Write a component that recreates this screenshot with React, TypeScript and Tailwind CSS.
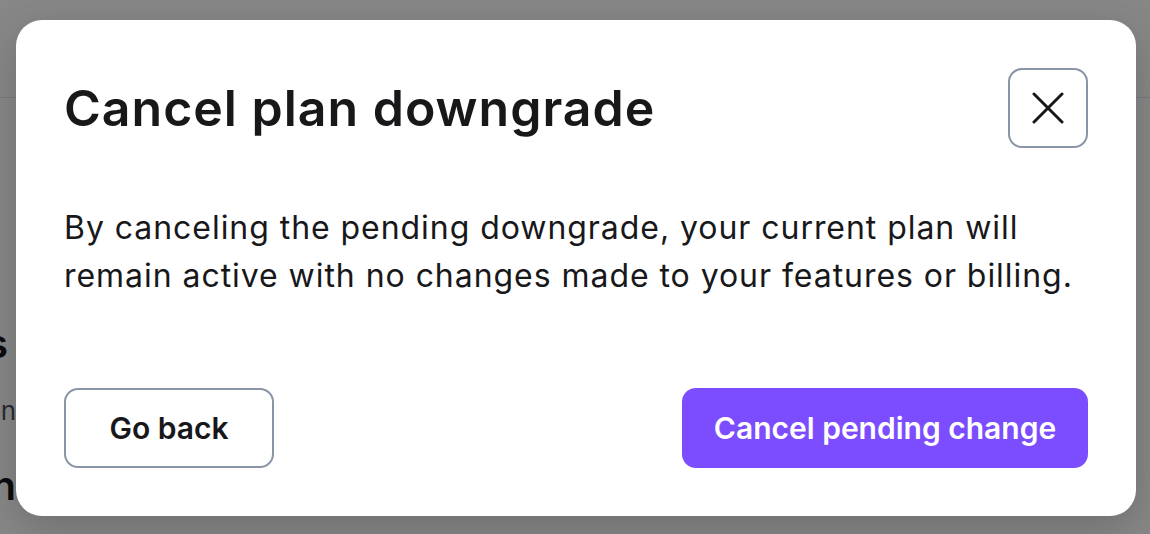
export default function App() {
  return (
    <div className="relative h-screen w-full overflow-hidden bg-white font-['Inter',sans-serif] text-[#18181b]">
      {/* page behind the dialog */}
      <div className="h-[98px] border-b border-[#e5e7eb]" />
      <div className="flex w-[16px] flex-col items-end overflow-hidden">
        <h2 className="mt-[222px] whitespace-nowrap pr-[8px] text-[40px] font-semibold leading-[48px]">Plans</h2>
        <p className="mt-[26px] whitespace-nowrap text-[26px] leading-[34px] text-[#4b5563]">Manage your subscription plan</p>
        <h3 className="mt-[34px] whitespace-nowrap text-[40px] font-semibold leading-[48px]">Billing information</h3>
      </div>

      {/* overlay */}
      <div className="absolute inset-0 flex items-center justify-center bg-black/[0.47] pl-[2px] pt-[2px]">
        <div className="w-[1120px] rounded-[26px] bg-white p-12 shadow-[0_12px_40px_rgba(0,0,0,0.18)]">
          <div className="flex items-center justify-between">
            <h2 className="text-[50px] font-semibold leading-[56px] tracking-[1px]">Cancel plan downgrade</h2>
            <button className="flex size-20 items-center justify-center rounded-[14px] border-2 border-[#8a94a8] bg-white">
              <svg width="32" height="32" viewBox="0 0 32 32" fill="none" stroke="#18181b" strokeWidth="3" strokeLinecap="round">
                <path d="M2 2L30 30M30 2L2 30" />
              </svg>
            </button>
          </div>

          <p className="mt-[56px] text-[32px] leading-[48px] tracking-[0.95px]">
            By canceling the pending downgrade, your current plan will
            <br />
            remain active with no changes made to your features or billing.
          </p>

          <div className="mt-[88px] flex items-center justify-between">
            <button className="h-20 w-[210px] rounded-[14px] border-2 border-[#8a94a8] bg-white text-[30px] font-semibold">
              Go back
            </button>
            <button className="h-20 w-[406px] rounded-[14px] bg-[#7c4dff] text-[30px] font-semibold text-white">
              Cancel pending change
            </button>
          </div>
        </div>
      </div>
    </div>
  );
}
